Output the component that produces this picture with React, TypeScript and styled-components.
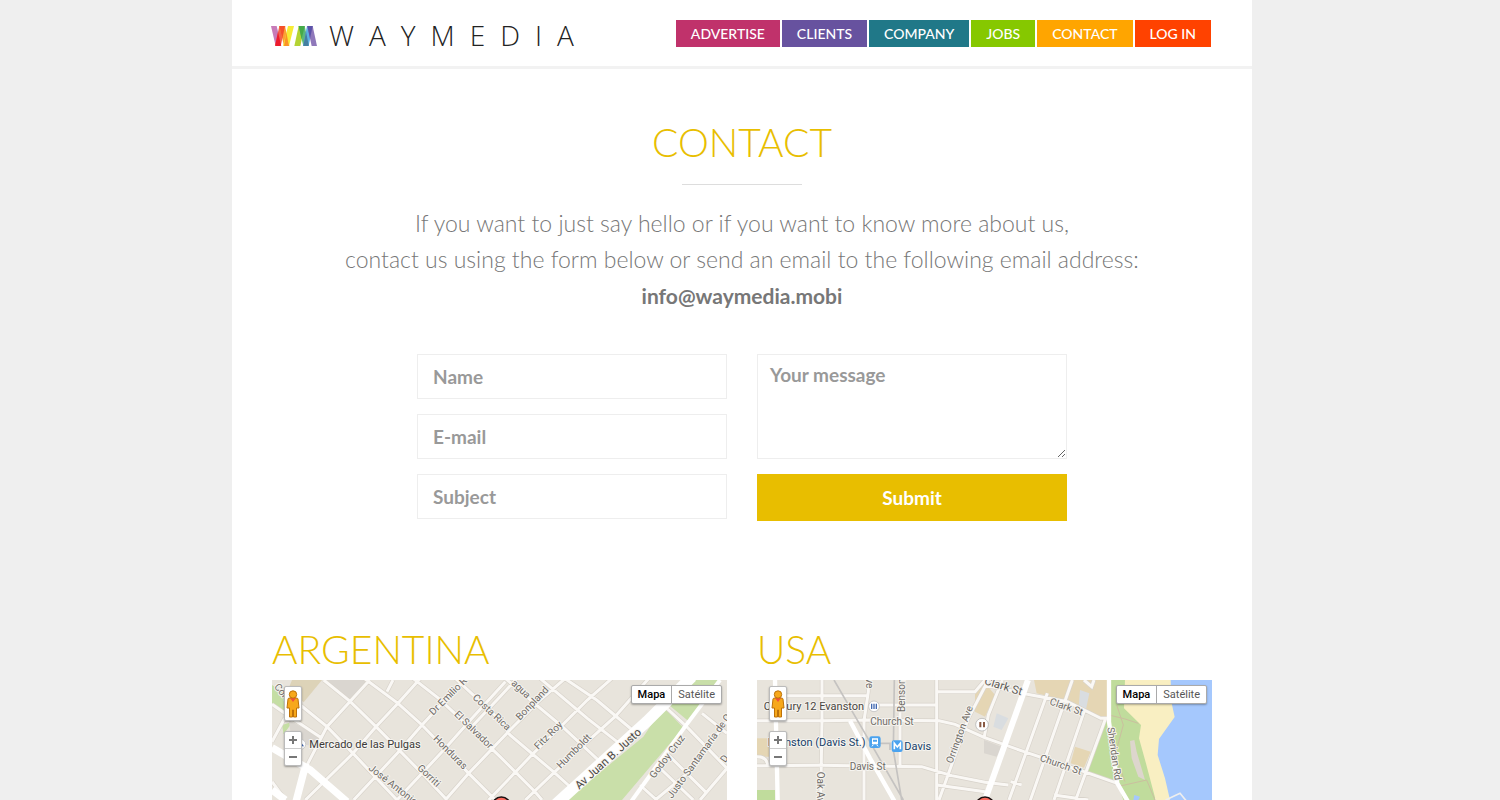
import React from 'react';
import styled, { createGlobalStyle } from 'styled-components';

const GlobalStyle = createGlobalStyle`
  *, *::before, *::after { box-sizing: border-box; }
  body {
    margin: 0;
    padding-right: 16px;
    background: #efefef;
    color: #777;
    font-family: Lato, "Liberation Sans", sans-serif;
  }
`;

const gold = '#e8be00';

const Page = styled.div`
  max-width: 1020px;
  margin: 0 auto;
  background: #fff;
`;

const Header = styled.header`
  display: flex;
  align-items: flex-start;
  justify-content: space-between;
  height: 69px;
  padding: 20px 41px 0 39px;
  border-bottom: 3px solid #f2f2f2;
`;

const Brand = styled.a`
  display: flex;
  align-items: flex-start;
  gap: 12px;
  color: #222;
  text-decoration: none;
  font: 300 28px/30px "Open Sans", sans-serif;
  letter-spacing: 15px;
  svg { margin-top: 6px; }
`;

const Nav = styled.nav`
  display: flex;
  gap: 2px;
`;

const NavLink = styled.a<{ $color: string }>`
  padding: 0 15px;
  background: ${(p) => p.$color};
  color: #fff;
  font-size: 14px;
  font-weight: 500;
  line-height: 27px;
  text-decoration: none;
`;

const Intro = styled.section`
  padding: 49px 40px 0;
  text-align: center;
`;

const Title = styled.h1`
  margin: 0;
  color: ${gold};
  font-size: 39px;
  font-weight: 300;
  line-height: 48px;
`;

const Divider = styled.hr`
  width: 120px;
  height: 1px;
  margin: 18px auto 20px;
  border: 0;
  background: #ddd;
`;

const Lead = styled.p`
  margin: 0;
  font-size: 23px;
  font-weight: 300;
  line-height: 36px;
`;

const Email = styled.a`
  display: block;
  color: #777;
  font-size: 21px;
  font-weight: 700;
  line-height: 38px;
  text-decoration: none;
`;

const Form = styled.form`
  display: grid;
  grid-template-columns: repeat(2, minmax(0, 310px));
  gap: 30px;
  justify-content: center;
  padding: 39px 40px 0;
`;

const FormColumn = styled.div`
  display: flex;
  flex-direction: column;
  gap: 15px;
`;

const Field = styled.input`
  width: 100%;
  height: 45px;
  padding: 0 15px;
  border: 1px solid #eee;
  background: #fff;
  color: #777;
  font: 700 19px/24px Lato, sans-serif;
  &::placeholder { color: #999; opacity: 1; }
`;

const Message = styled.textarea`
  display: block;
  width: 100%;
  height: 105px;
  padding: 8px 12px;
  border: 1px solid #eee;
  background: #fff;
  color: #777;
  font: 700 19px/24px Lato, sans-serif;
  resize: both;
  &::placeholder { color: #999; opacity: 1; }
`;

const Submit = styled.button`
  width: 100%;
  height: 47px;
  border: 0;
  background: ${gold};
  color: #fff;
  font: 700 19px/24px Lato, sans-serif;
  cursor: pointer;
`;

const Offices = styled.div`
  display: grid;
  grid-template-columns: repeat(2, minmax(0, 1fr));
  gap: 30px;
  padding: 104px 40px 0;
`;

const OfficeTitle = styled.h2`
  margin: 0 0 7px;
  color: ${gold};
  font-size: 39px;
  font-weight: 300;
  line-height: 48px;
`;

const MapFrame = styled.div`
  position: relative;
  height: 120px;
  overflow: hidden;
  background: #e8e4dc;
`;

const MapDrawing = styled.svg`
  display: block;
  width: 100%;
  height: 100%;
  font-family: Roboto, sans-serif;
`;

const MapControls = styled.div`
  position: absolute;
  top: 6px;
  left: 12px;
  display: flex;
  flex-direction: column;
  gap: 10px;
`;

const ControlBox = styled.div`
  display: flex;
  flex-direction: column;
  width: 18px;
  border: 1px solid #bbb;
  border-radius: 2px;
  background: #fff;
  box-shadow: 0 1px 2px rgba(0, 0, 0, 0.35);
`;

const ControlButton = styled.button<{ $height: number }>`
  display: flex;
  align-items: center;
  justify-content: center;
  height: ${(p) => p.$height}px;
  padding: 0;
  border: 0;
  background: none;
  & + & { border-top: 1px solid #ccc; }
`;

const TypeSwitch = styled.div`
  position: absolute;
  top: 5px;
  right: 5px;
  display: flex;
  border: 1px solid #aaa;
  border-radius: 2px;
  background: #fff;
  box-shadow: 0 1px 2px rgba(0, 0, 0, 0.3);
`;

const TypeButton = styled.button<{ $active?: boolean }>`
  height: 17px;
  padding: 0 6px;
  border: 0;
  background: none;
  color: ${(p) => (p.$active ? '#000' : '#565656')};
  font: ${(p) => (p.$active ? 500 : 400)} 11px/17px Roboto, sans-serif;
  & + & { border-left: 1px solid #aaa; }
`;

const logoShapes = [
  ['#c77bb8', '118,78 135,78 149,138 132,138'],
  ['#f3614c', '143,78 161,78 147,138 130,138'],
  ['#fba136', '143,78 160,78 173,138 157,138'],
  ['#f7ec35', '169,78 187,78 172,138 154,138'],
  ['#b4d334', '201,78 219,78 206,138 188,138'],
  ['#5cb879', '201,78 219,78 232,138 215,138'],
  ['#5eaee3', '226,78 243,78 231,138 214,138'],
  ['#8f78ba', '227,78 243,78 256,138 240,138'],
  ['#ed1c2e', '139,96 148,134 147,138 132,138 131,134'],
  ['#f4502a', '143,78 160,78 152,116'],
  ['#fb9426', '164,97 172,138 157,138'],
  ['#45aa48', '201,78 219,78 210,118'],
  ['#457fa0', '223,95 231,134 230,138 215,138'],
  ['#5b52a8', '227,78 243,78 235,116'],
];

const Logo = () => (
  <svg width="46" height="20" viewBox="118 78 138 60" aria-hidden="true">
    {logoShapes.map(([fill, points]) => (
      <polygon key={fill} fill={fill} points={points} />
    ))}
  </svg>
);

type LabelProps = { x: number; y: number; a?: number; s?: number; c?: string; children: React.ReactNode };

const Label = ({ x, y, a = 0, s = 30, c = '#6f6b66', children }: LabelProps) => (
  <text
    transform={`translate(${x} ${y}) rotate(${a})`}
    fontSize={s}
    fill={c}
    stroke="#f6f4f0"
    strokeWidth="6"
    strokeLinejoin="round"
    paintOrder="stroke"
  >
    {children}
  </text>
);

const Marker = ({ x }: { x: number }) => (
  <circle cx={x} cy="394" r="28" fill="#fb6a5e" stroke="#1a1010" strokeWidth="5" />
);

const argentinaStreets = [
  'M0 88L60 130L150 190M85 90L165 155L243 235L375 375M155 15L235 80L312 155L450 295L525 375M270 5L378 85L450 150L590 295L670 375M410 0L500 70L580 145L684 245L789 350L810 375M550 10L684 135L714 180L844 290L905 345',
  'M293 15L165 155L100 280M445 10L378 85L312 155L243 235L100 375M575 15L450 150L385 225L245 375M700 20L600 130L520 220L375 375M735 10L684 65L590 165M880 10L799 80L714 165L590 295L520 375M1020 10L946 75L871 150L784 235L684 340L650 375M1135 5L1029 125L946 200L849 290L760 375',
  'M694 5L799 95L871 155L984 260M804 10L946 130L1054 215M870 5L974 75L1099 180M345 50L363 15M0 200L38 130M0 320L40 375M1174 90L1244 155L1365 280M1154 270L1264 375M1184 235L1300 350M1104 330L1154 375M1150 375L1240 300L1365 140M1284 375L1365 280M1290 115L1365 175',
].join('');

const ArgentinaMap = () => (
  <MapDrawing viewBox="0 15 1365 360" preserveAspectRatio="xMidYMin slice" role="img" aria-label="Buenos Aires">
    <rect y="15" width="1365" height="360" fill="#e8e4dc" />
    <path fill="#ddd3b8" d="M60 15H150L95 82L50 40Z" />
    <path fill="#c5dea4" d="M0 30L88 90L55 128L0 88ZM30 150L62 140L35 178Z" />
    <path fill="#dad6d0" d="M165 15H285L235 78ZM50 135L150 190L130 215L60 200Z" />
    <path fill="#c9dfa9" d="M1244 15H1340L1249 138L1188 88ZM1174 95L1234 158L1050 375H884L1114 185Z" />
    <path fill="none" stroke="#d8d3cb" strokeWidth="13" d={argentinaStreets} />
    <path fill="none" stroke="#faf8f5" strokeWidth="9" d={argentinaStreets} />
    <g fill="none" stroke="#fff">
      <path strokeWidth="12" d="M1344 15L1239 155L1070 390" />
      <path strokeWidth="22" d="M0 218L115 285L225 380M102 265L72 380M0 345L40 375" />
      <path strokeWidth="34" d="M849 390L1124 140L1260 5" />
    </g>
    <circle cx="86" cy="208" r="15" fill="#fff" stroke="#bbb" strokeWidth="2" />
    <path d="M86 200L96 214H82Z" fill="#3f66b0" />
    <Label x={5} y={36} a={50}>Córdoba</Label>
    <Label x={112} y={218} s={33} c="#3d3a38">Mercado de las Pulgas</Label>
    <Label x={484} y={122} a={-45}>Dr Emilio R</Label>
    <Label x={600} y={70} a={43}>Costa Rica</Label>
    <Label x={545} y={120} a={44}>El Salvador</Label>
    <Label x={482} y={193} a={45}>Honduras</Label>
    <Label x={434} y={281} a={43}>Gorriti</Label>
    <Label x={288} y={283} a={38}>José Antonio</Label>
    <Label x={716} y={27} a={43}>agua</Label>
    <Label x={744} y={137} a={-46}>Bonpland</Label>
    <Label x={799} y={225} a={-45}>Fitz Roy</Label>
    <Label x={866} y={282} a={-45}>Humboldt</Label>
    <Label x={922} y={344} a={-42} s={34} c="#4a4642">Av Juan B. Justo</Label>
    <Label x={1147} y={312} a={-53}>Godoy Cruz</Label>
    <Label x={1200} y={372} a={-54}>Justo Santamaría de Oro</Label>
    <Label x={1360} y={265} a={-55}>D</Label>
    <Marker x={688} />
  </MapDrawing>
);

const usStreets =
  'M6 137H200L345 135L552 137L600 148L687 187L807 230L987 290L1087 325M6 272L190 271L500 275L590 302L690 322L760 330M201 15V137L197 375M340 15V50L327 137V375M435 15V272M545 15V302M350 90H545M545 50H660L690 15M72 62H340M545 375L545 300M700 15L640 130L552 375M6 245Q35 245 38 270M687 30L817 58L937 80L1037 130H1062M742 15L700 120L687 190M877 55L762 375M952 15L807 430M987 15L1010 35L1017 15M987 110L897 375M1052 130L962 375M897 360L1000 375M767 320L800 330M545 330L690 350';

const UsaMap = () => (
  <MapDrawing viewBox="6 15 1365 360" preserveAspectRatio="xMidYMin slice" role="img" aria-label="Evanston">
    <rect x="6" y="15" width="1365" height="360" fill="#e8e4dc" />
    <path fill="#e5d6b4" d="M6 190H42V245H6ZM660 50L687 20L720 60L690 125L660 110ZM837 15H1062V125L1040 125L937 78L845 55ZM960 215L1007 230L987 278L947 265Z" />
    <path fill="#dad6d0" d="M687 195L740 215L725 245L687 235Z" />
    <path fill="#d9dde0" d="M975 45L1003 55L990 118L970 110ZM725 115L760 130L740 165L715 155Z" />
    <path fill="#c0dc9c" d="M6 345H60V375H6ZM1062 15H1200V375H1105L1087 322L995 290L1052 135H1062Z" />
    <path fill="#f9efc2" d="M1110 15H1260V375H1202L1172 262L1152 190L1158 150L1107 100Z" />
    <path fill="#a5c8fd" d="M1247 15H1371V375H1245L1230 310L1208 240L1212 192L1259 126L1249 80ZM1138 360L1155 365L1150 375H1135Z" />
    <path fill="#ddd6cd" d="M1125 198L1138 195L1145 230L1170 315L1150 305L1130 250Z" />
    <path fill="none" stroke="#cbbf9f" strokeWidth="3" d="M1062 120Q1110 130 1150 145M1087 335L1175 315L1200 375M1085 90L1105 150L1080 240L1110 320" />
    <path fill="none" stroke="#d8d3cb" strokeWidth="13" d={usStreets} />
    <path fill="none" stroke="#faf8f5" strokeWidth="9" d={usStreets} />
    <path fill="none" stroke="#fff" strokeWidth="13" d="M60 15L68 375M285 137L345 250L425 390M1062 15V140L1087 325L1125 390" />
    <path fill="none" stroke="#fff" strokeWidth="18" d="M819 15L690 375" />
    <path fill="none" stroke="#c5c3c1" strokeWidth="5" d="M237 15L330 175L445 375M418 15L415 225L440 375M360 205H405V225" />
    <path fill="none" stroke="#eee" strokeWidth="5" d="M1232 375L1275 355L1300 385" />
    <Label x={26} y={104} s={33} c="#4a4642">Century 12 Evanston</Label>
    <circle cx="357" cy="94" r="16" fill="#fff" stroke="#b5b5b5" strokeWidth="2" />
    <path d="M350 86V102M357 86V102M364 86V102" stroke="#4168b1" strokeWidth="4" />
    <Label x={346} y={150}>Church St</Label>
    <Label x={284} y={284}>Davis St</Label>
    <Label x={38} y={212} s={33} c="#174069">Evanston (Davis St.)</Label>
    <Label x={448} y={224} s={33} c="#174069">Davis</Label>
    <rect x="343" y="184" width="34" height="35" rx="7" fill="#4ba3ef" />
    <path fill="#fff" fillRule="evenodd" d="M351 190H369V208H351ZM354 194V200H366V199V194Z" />
    <path d="M355 209L351 214M365 209L369 214" stroke="#fff" strokeWidth="3" />
    <rect x="410" y="196" width="33" height="35" rx="7" fill="#4ba3ef" />
    <path d="M418 223V205L427 216L436 205V223" fill="none" stroke="#fff" strokeWidth="5" />
    <Label x={332} y={10} a={90}>ve</Label>
    <Label x={449} y={111} a={-90}>Benson</Label>
    <Label x={187} y={290} a={90}>Oak Ave</Label>
    <Label x={592} y={267} a={-70}>Orrington Ave</Label>
    <circle cx="681" cy="149" r="19" fill="#fff" stroke="#aaa" strokeWidth="2" />
    <path d="M673 141H679V157H673ZM684 141H690V157H684Z" fill="#8a5a44" />
    <Label x={686} y={27} a={17} s={34} c="#5d5954">Clark St</Label>
    <Label x={882} y={88} a={19}>Clark St</Label>
    <Label x={853} y={257} a={19}>Church St</Label>
    <Label x={1057} y={158} a={82}>Sheridan Rd</Label>
    <Marker x={690} />
  </MapDrawing>
);

const Pegman = () => (
  <svg width="14" height="28" viewBox="0 0 14 28" aria-hidden="true">
    <path
      d="M2 9Q2 8 4 8H10Q12 8 12 9L13 18H10.500V27H7.500V20H6.500V27H3.500V18H1Z"
      fill="#f7a81b"
      stroke="#bd7209"
    />
    <path d="M4 8H10L7 12Z" fill="#f0503c" />
    <circle cx="7" cy="4.500" r="3.700" fill="#f7a81b" stroke="#bd7209" />
  </svg>
);

const ZoomIcon = ({ plus }: { plus?: boolean }) => (
  <svg width="10" height="10" viewBox="0 0 10 10" aria-hidden="true">
    <path d={plus ? 'M1 5H9M5 1V9' : 'M1 5H9'} stroke="#777" strokeWidth="2" />
  </svg>
);

const Office = ({ name, children }: { name: string; children: React.ReactNode }) => (
  <section>
    <OfficeTitle>{name}</OfficeTitle>
    <MapFrame>
      {children}
      <MapControls>
        <ControlBox>
          <ControlButton $height={33} type="button" aria-label="Street View"><Pegman /></ControlButton>
        </ControlBox>
        <ControlBox>
          <ControlButton $height={16} type="button" aria-label="Zoom in"><ZoomIcon plus /></ControlButton>
          <ControlButton $height={17} type="button" aria-label="Zoom out"><ZoomIcon /></ControlButton>
        </ControlBox>
      </MapControls>
      <TypeSwitch>
        <TypeButton $active type="button">Mapa</TypeButton>
        <TypeButton type="button">Satélite</TypeButton>
      </TypeSwitch>
    </MapFrame>
  </section>
);

const links = [
  ['ADVERTISE', '#c0326b'],
  ['CLIENTS', '#67529f'],
  ['COMPANY', '#207888'],
  ['JOBS', '#86c800'],
  ['CONTACT', '#ffa500'],
  ['LOG IN', '#ff4200'],
];

export default function App() {
  return (
    <>
      <GlobalStyle />
      <Page>
        <Header>
          <Brand href="#home"><Logo />WAYMEDIA</Brand>
          <Nav>
            {links.map(([label, color]) => (
              <NavLink key={label} href="#" $color={color}>{label}</NavLink>
            ))}
          </Nav>
        </Header>
        <main>
          <Intro>
            <Title>CONTACT</Title>
            <Divider />
            <Lead>
              If you want to just say hello or if you want to know more about us,
              <br />
              contact us using the form below or send an email to the following email address:
            </Lead>
            <Email href="mailto:info@waymedia.mobi">info@waymedia.mobi</Email>
          </Intro>
          <Form onSubmit={(e) => e.preventDefault()}>
            <FormColumn>
              <Field type="text" placeholder="Name" aria-label="Name" />
              <Field type="email" placeholder="E-mail" aria-label="E-mail" />
              <Field type="text" placeholder="Subject" aria-label="Subject" />
            </FormColumn>
            <FormColumn>
              <Message placeholder="Your message" aria-label="Your message" />
              <Submit type="submit">Submit</Submit>
            </FormColumn>
          </Form>
          <Offices>
            <Office name="ARGENTINA"><ArgentinaMap /></Office>
            <Office name="USA"><UsaMap /></Office>
          </Offices>
        </main>
      </Page>
    </>
  );
}
